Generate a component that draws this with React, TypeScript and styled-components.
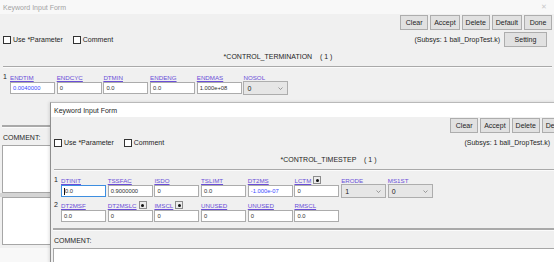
import React from 'react';
import styled, { createGlobalStyle, css } from 'styled-components';

type Field = {
    label: string;
    value: string;
    select?: boolean;
    picker?: boolean;
    accent?: boolean;
    focused?: boolean;
};

const GlobalStyle = createGlobalStyle`
    html, body { margin: 0; padding: 0; }
    body {
        width: 554px;
        height: 262px;
        overflow: hidden;
        font-family: "Liberation Sans", Arial, sans-serif;
        color: #1e1e1e;
    }
`;

const Desktop = styled.div`
    position: relative;
    width: 554px;
    height: 262px;
    overflow: hidden;
    background: #f8f8f8;
`;

// windows sit on the desktop at their own coordinates
const Frame = styled.div<{ $x: number; $y: number; $h: number; $active?: boolean }>`
    position: absolute;
    left: ${p => p.$x}px;
    top: ${p => p.$y}px;
    width: 556px;
    height: ${p => p.$h}px;
    background: #f0f0f0;
    display: flex;
    flex-direction: column;
    box-sizing: border-box;
    ${p =>
        p.$active &&
        css`
            border-left: 1px solid #8e8e8e;
            border-top: 1px solid #b9b9b9;
            box-shadow: -1px 0 3px rgba(0, 0, 0, 0.12);
        `}
`;

const TitleBar = styled.div<{ $active?: boolean }>`
    height: 14px;
    flex: none;
    display: flex;
    align-items: center;
    justify-content: space-between;
    padding: 0 9px 0 3px;
    font-size: 7px;
    background: ${p => (p.$active ? '#ffffff' : '#f8f8f8')};
    color: ${p => (p.$active ? '#262626' : '#a3a3a3')};
`;

const CloseMark = styled.span`
    font-size: 7px;
    color: #c9c9c9;
`;

const Toolbar = styled.div`
    display: flex;
    justify-content: flex-end;
    gap: 2px;
    padding: 1px 4px 0 0;
`;

const Button = styled.button<{ $wide?: boolean }>`
    height: 15px;
    min-width: ${p => (p.$wide ? '43px' : '28px')};
    padding: 0 3px;
    margin: 0;
    border: 1px solid #adadad;
    background: #e1e1e1;
    font-family: inherit;
    font-size: 7px;
    color: #1e1e1e;
    line-height: 13px;
`;

const OptionsRow = styled.div`
    height: 19px;
    display: flex;
    align-items: center;
    justify-content: space-between;
    padding: 0 9px 0 3px;
    font-size: 7px;
`;

const Checks = styled.div`
    display: flex;
    align-items: center;
    gap: 10px;
`;

const Check = styled.label`
    display: flex;
    align-items: center;
    gap: 2px;
`;

const Box = styled.span`
    width: 6px;
    height: 6px;
    border: 1px solid #333;
    background: #fff;
`;

const Subsys = styled.div`
    display: flex;
    align-items: center;
    gap: 4px;
`;

const KeywordTitle = styled.div`
    margin-top: 2px;
    height: 11px;
    line-height: 11px;
    text-align: center;
    font-size: 7px;
    white-space: pre;
`;

const Divider = styled.div<{ $thick?: boolean }>`
    margin: ${p => (p.$thick ? '0 2px' : '4px 4px 0 3px')};
    border-top: ${p => (p.$thick ? '2px' : '1px')} solid #a9a9a9;
    border-bottom: 1px solid #fbfbfb;
`;

const FieldsArea = styled.div`
    height: 57px;
    box-sizing: border-box;
    padding: 4px 0 0 3px;
    display: flex;
    flex-direction: column;
    gap: 2px;
`;

const FieldRow = styled.div`
    display: flex;
    align-items: flex-start;
`;

const RowNum = styled.span`
    width: 7px;
    height: 10px;
    line-height: 10px;
    font-size: 7px;
`;

const Cells = styled.div`
    display: flex;
    gap: 1.7px;
`;

const Cell = styled.div`
    width: 45px;
    display: flex;
    flex-direction: column;
`;

const FieldLabel = styled.div`
    height: 10px;
    display: flex;
    align-items: center;
    gap: 2px;
    font-size: 6.2px;
    color: #6a4ed8;
    text-decoration: underline;
`;

const PickerButton = styled.span`
    width: 6px;
    height: 6px;
    border: 1px solid #8c8c8c;
    background: #ececec;
    display: flex;
    align-items: center;
    justify-content: center;

    &::after {
        content: '';
        width: 3px;
        height: 3px;
        border-radius: 50%;
        background: #111;
    }
`;

const TextBox = styled.div<{ $accent?: boolean; $focused?: boolean }>`
    height: 12px;
    box-sizing: border-box;
    border: 1px solid ${p => (p.$focused ? '#3d8ee0' : '#acacac')};
    background: #fff;
    padding: 0 2px;
    display: flex;
    align-items: center;
    font-size: 5.8px;
    color: ${p => (p.$accent ? '#3a4aff' : '#303030')};
    white-space: nowrap;
    overflow: hidden;

    ${p =>
        p.$focused &&
        css`
            &::before {
                content: '';
                width: 1px;
                height: 7px;
                background: #111;
                margin-right: 0;
            }
        `}
`;

const SelectBox = styled.div`
    height: 14px;
    margin-top: -1px;
    box-sizing: border-box;
    border: 1px solid #adadad;
    background: #e6e6e6;
    padding: 0 4px 0 3px;
    display: flex;
    align-items: center;
    justify-content: space-between;
    font-size: 7px;
    color: #222;
`;

const CommentLabel = styled.div`
    margin-top: 5px;
    height: 10px;
    line-height: 10px;
    padding-left: 3px;
    font-size: 7px;
`;

const CommentBox = styled.div`
    margin: 2px 2px 0;
    height: 48px;
    flex: none;
    box-sizing: border-box;
    border: 1px solid #a6a6a6;
    background: #fff;
`;

const Splitter = styled.div`
    height: 4px;
    flex: none;
    background: #d4d4d4;
`;

const LowerBox = styled(CommentBox)`
    margin-top: 0;
`;

const Chevron = () => (
    <svg width="5" height="3" viewBox="0 0 5 3">
        <path d="M0.5 0.5 L2.5 2.5 L4.5 0.5" fill="none" stroke="#777" strokeWidth="0.7" />
    </svg>
);

const FieldCell = ({ field }: { field: Field }) => (
    <Cell>
        <FieldLabel>
            {field.label}
            {field.picker && <PickerButton />}
        </FieldLabel>
        {field.select ? (
            <SelectBox>
                {field.value}
                <Chevron />
            </SelectBox>
        ) : (
            <TextBox $accent={field.accent} $focused={field.focused}>
                {field.value}
            </TextBox>
        )}
    </Cell>
);

type WindowProps = {
    x: number;
    y: number;
    h: number;
    active?: boolean;
    keyword: string;
    rows: Field[][];
};

const KeywordWindow = ({ x, y, h, active, keyword, rows }: WindowProps) => (
    <Frame $x={x} $y={y} $h={h} $active={active}>
        <TitleBar $active={active}>
            Keyword Input Form
            {!active && <CloseMark>✕</CloseMark>}
        </TitleBar>
        <Toolbar>
            <Button>Clear</Button>
            <Button>Accept</Button>
            <Button>Delete</Button>
            <Button>Default</Button>
            <Button>Done</Button>
        </Toolbar>
        <OptionsRow>
            <Checks>
                <Check>
                    <Box />
                    Use *Parameter
                </Check>
                <Check>
                    <Box />
                    Comment
                </Check>
            </Checks>
            <Subsys>
                (Subsys: 1 ball_DropTest.k)
                <Button $wide>Setting</Button>
            </Subsys>
        </OptionsRow>
        <KeywordTitle>{`${keyword}    ( 1 )`}</KeywordTitle>
        <Divider />
        <FieldsArea>
            {rows.map((row, i) => (
                <FieldRow key={i}>
                    <RowNum>{i + 1}</RowNum>
                    <Cells>
                        {row.map(f => (
                            <FieldCell key={f.label + i} field={f} />
                        ))}
                    </Cells>
                </FieldRow>
            ))}
        </FieldsArea>
        <Divider $thick />
        <CommentLabel>COMMENT:</CommentLabel>
        <CommentBox />
        <Splitter />
        <LowerBox />
    </Frame>
);

const terminationRows: Field[][] = [
    [
        { label: 'ENDTIM', value: '0.0040000', accent: true },
        { label: 'ENDCYC', value: '0' },
        { label: 'DTMIN', value: '0.0' },
        { label: 'ENDENG', value: '0.0' },
        { label: 'ENDMAS', value: '1.000e+08' },
        { label: 'NOSOL', value: '0', select: true }
    ]
];

const timestepRows: Field[][] = [
    [
        { label: 'DTINIT', value: '0.0', focused: true },
        { label: 'TSSFAC', value: '0.9000000' },
        { label: 'ISDO', value: '0' },
        { label: 'TSLIMT', value: '0.0' },
        { label: 'DT2MS', value: '-1.000e-07', accent: true },
        { label: 'LCTM', value: '0', picker: true },
        { label: 'ERODE', value: '1', select: true },
        { label: 'MS1ST', value: '0', select: true }
    ],
    [
        { label: 'DT2MSF', value: '0.0' },
        { label: 'DT2MSLC', value: '0', picker: true },
        { label: 'IMSCL', value: '0', picker: true },
        { label: 'UNUSED', value: '0' },
        { label: 'UNUSED', value: '0' },
        { label: 'RMSCL', value: '0.0' }
    ]
];

const App = () => {
    return (
        <>
            <GlobalStyle />
            <Desktop>
                <KeywordWindow x={0} y={0} h={248} keyword="*CONTROL_TERMINATION" rows={terminationRows} />
                <KeywordWindow x={50} y={102} h={262} active keyword="*CONTROL_TIMESTEP" rows={timestepRows} />
            </Desktop>
        </>
    );
};

export default App;
